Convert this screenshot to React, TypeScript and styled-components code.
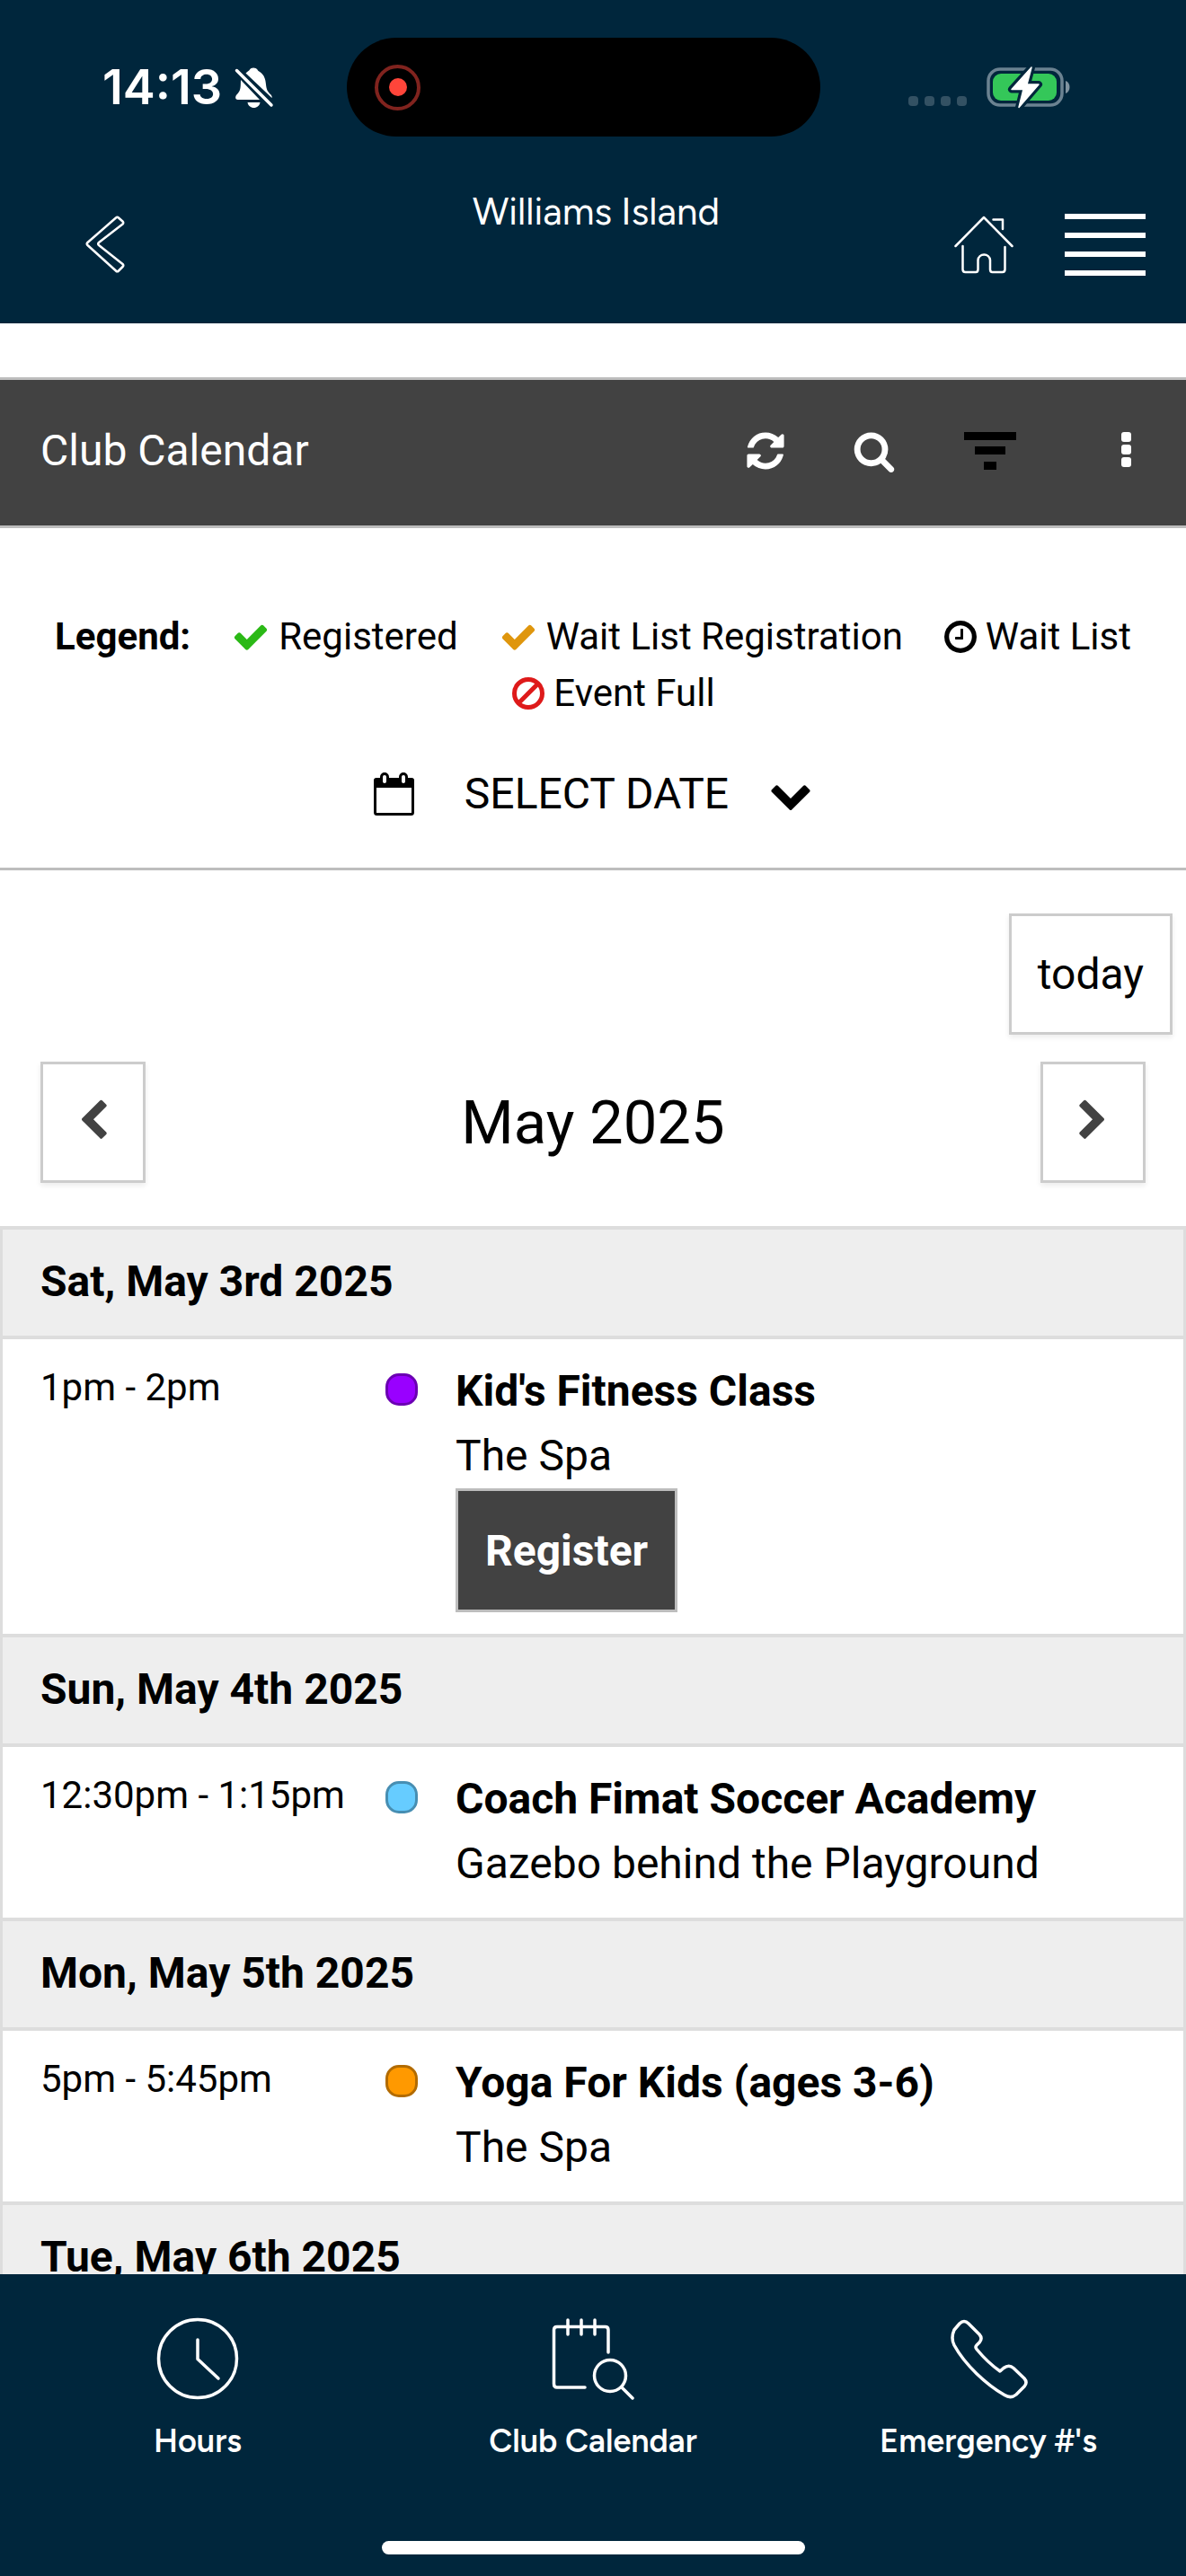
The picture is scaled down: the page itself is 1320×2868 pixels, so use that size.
import React from "react";
import styled, { createGlobalStyle } from "styled-components";

const navy = "#00263c";
const charcoal = "#424242";
const line = "#bdbdbd";
const listLine = "#dddddd";
const brandFont = `Figtree, Lato, "Open Sans", sans-serif`;

const GlobalStyle = createGlobalStyle`
  *, *::before, *::after { box-sizing: border-box; }
  body { margin: 0; background: #fff; }
  body, button { font-family: Roboto, "Noto Sans", sans-serif; color: #000; }
  button { border: 0; padding: 0; background: none; cursor: pointer; }
  h1, h2, h3, p, ul { margin: 0; padding: 0; font-weight: inherit; }
  ul { list-style: none; }
  svg { display: block; flex: none; }
`;

const Screen = styled.div`
  display: flex;
  flex-direction: column;
  height: 100vh;
`;

const AppHeader = styled.header`
  background: ${navy};
  color: #fff;
`;

const StatusBar = styled.div`
  display: grid;
  grid-template-columns: 1fr auto 1fr;
  align-items: center;
  height: 194px;
  padding-right: 21px;
`;

const StatusLeft = styled.div`
  display: flex;
  align-items: center;
  gap: 14px;
  padding-left: 114px;
`;

const Time = styled.time`
  font: 600 54px/60px Inter, sans-serif;
`;

const Island = styled.div`
  display: flex;
  align-items: center;
  width: 527px;
  height: 110px;
  padding-left: 31px;
  border-radius: 55px;
  background: #000;
`;

const Recording = styled.span`
  display: grid;
  place-items: center;
  width: 51px;
  height: 51px;
  border: 4px solid #80231e;
  border-radius: 50%;

  &::after {
    content: "";
    width: 20px;
    height: 20px;
    border-radius: 50%;
    background: #ff453a;
  }
`;

const StatusRight = styled.div`
  display: flex;
  align-items: center;
  justify-content: flex-end;
  gap: 22px;
  padding-right: 107px;
`;

const Signal = styled.span`
  display: flex;
  gap: 7px;
  padding-top: 30px;
`;

const SignalDot = styled.span`
  width: 11px;
  height: 11px;
  border-radius: 4px;
  background: #335163;
`;

const NavBar = styled.div`
  display: grid;
  grid-template-columns: 1fr auto 1fr;
  align-items: center;
  height: 166px;
  padding: 0 45px 10px 52px;
`;

const BackButton = styled.button`
  justify-self: start;
  padding-left: 43px;
`;

const ClubName = styled.h1`
  align-self: start;
  padding-top: 12px;
  font: 400 42px/60px ${brandFont};
`;

const NavActions = styled.div`
  display: flex;
  align-items: center;
  justify-content: flex-end;
  gap: 57px;
`;

const MenuButton = styled.button`
  display: grid;
  gap: 15px;
  width: 90px;
`;

const MenuBar = styled.span`
  height: 6px;
  background: #fff;
`;

const Content = styled.main`
  flex: 1;
  min-height: 0;
  overflow-y: auto;
  scrollbar-width: none;
  padding-top: 60px;
`;

const Toolbar = styled.div`
  display: flex;
  align-items: center;
  justify-content: space-between;
  height: 168px;
  padding: 0 60px 4px 45px;
  border: solid ${line};
  border-width: 3px 0;
  background: ${charcoal};
  color: #fff;
`;

const ToolbarTitle = styled.h2`
  font-size: 48px;
  line-height: 72px;
`;

const ToolbarActions = styled.div`
  display: flex;
  align-items: center;
`;

const ToolButton = styled.button<{ $gap?: number; $color?: string }>`
  margin-left: ${(p) => p.$gap ?? 0}px;
  color: ${(p) => p.$color ?? "#fff"};
`;

const Filters = styled.section`
  padding: 89px 0 46px;
  border-bottom: 3px solid ${line};
`;

const Legend = styled.ul`
  display: flex;
  flex-wrap: wrap;
  justify-content: center;
  font-size: 42px;
  line-height: 63px;
`;

const LegendTitle = styled.li`
  font-weight: 700;
`;

const LegendItem = styled.li`
  display: flex;
  align-items: center;
  gap: 10px;
  margin-left: 46px;
`;

const DateButton = styled.button`
  display: flex;
  align-items: center;
  gap: 45px;
  margin: 45px auto 0;
  font-size: 48px;
  line-height: 72px;
`;

const TodayRow = styled.div`
  display: flex;
  justify-content: flex-end;
  padding: 48px 15px 30px;
`;

const MonthRow = styled.div`
  display: flex;
  align-items: center;
  justify-content: space-between;
  padding: 0 45px 48px;
`;

const OutlineButton = styled.button<{ $square?: boolean }>`
  display: grid;
  place-items: center;
  height: 135px;
  ${(p) => (p.$square ? "width: 117px; padding-bottom: 3px;" : "padding: 0 29px;")}
  border: 3px solid #cccccc;
  background: #fff;
  box-shadow: 0 3px 6px rgba(0, 0, 0, 0.08);
  font-size: 48px;
`;

const Month = styled.h2`
  font-size: 67px;
  line-height: 80px;
`;

const Agenda = styled.div`
  border: solid ${listLine};
  border-width: 0 3px;
`;

const DayHeader = styled.h3`
  padding: 22px 42px 24px;
  border-top: 4px solid ${listLine};
  background: #eeeeee;
  font-size: 48px;
  font-weight: 700;
  line-height: 72px;
`;

const EventRow = styled.article`
  display: grid;
  grid-template-columns: 384px 78px 1fr;
  padding: 22px 42px 24px;
  border-top: 4px solid ${listLine};
`;

const EventTime = styled.time`
  font-size: 42px;
  line-height: 63px;
`;

const EventDot = styled.span<{ $fill: string; $edge: string }>`
  width: 36px;
  height: 36px;
  margin-top: 16px;
  border: 3px solid ${(p) => p.$edge};
  border-radius: 15px;
  background: ${(p) => p.$fill};
`;

const EventBody = styled.div`
  font-size: 48px;
  line-height: 72px;
`;

const EventTitle = styled.h4`
  margin: 0;
  font-weight: 700;
`;

const RegisterButton = styled.button`
  display: block;
  height: 138px;
  padding: 0 30px;
  border: 3px solid ${line};
  background: ${charcoal};
  color: #fff;
  font-size: 48px;
  font-weight: 700;
`;

const TabBar = styled.footer`
  display: flex;
  flex-direction: column;
  justify-content: space-between;
  align-items: center;
  height: 336px;
  padding: 48px 0 24px;
  background: ${navy};
`;

const Tabs = styled.nav`
  display: grid;
  grid-template-columns: repeat(3, 1fr);
  width: 100%;
`;

const Tab = styled.a`
  display: flex;
  flex-direction: column;
  align-items: center;
  gap: 22px;
  color: #fff;
  font: 600 36px/48px ${brandFont};
  text-decoration: none;
`;

const HomeIndicator = styled.div`
  width: 471px;
  height: 15px;
  border-radius: 8px;
  background: #fff;
`;

type GlyphProps = { d: string; size?: number; crop?: number; color?: string; flip?: boolean };

/* Solid glyph on a 1792 unit grid; crop trims the same margin off both sides. */
const Glyph = ({ d, size = 48, crop = 0, color = "currentColor", flip }: GlyphProps) => (
  <svg
    width={Math.round((size * (1792 - 2 * crop)) / 1792)}
    height={size}
    viewBox={`${crop} 0 ${1792 - 2 * crop} 1792`}
    aria-hidden="true"
  >
    <path d={d} fill={color} transform={flip ? "matrix(-1 0 0 1 1792 0)" : undefined} />
  </svg>
);

const glyphs = {
  refresh:
    "M1639 1056q0 5-1 7-64 268-268 434.5T892 1664q-146 0-282.500-55T366 1452l-129 129q-19 19-45 19t-45-19-19-45v-448q0-26 19-45t45-19h448q26 0 45 19t19 45-19 45l-137 137q71 66 161 102t187 36q134 0 250-65t186-179q11-17 53-117 8-23 30-23h192q13 0 22.500 9.500t9.500 22.500zm25-800v448q0 26-19 45t-45 19h-448q-26 0-45-19t-19-45 19-45l138-138q-148-137-349-137-134 0-250 65T460 628q-11 17-53 117-8 23-30 23H178q-13 0-22.500-9.500T146 736v-7q65-268 270-434.500T896 128q146 0 284 55.500T1425 340l130-129q19-19 45-19t45 19 19 45z",
  search:
    "M1216 832q0-185-131.500-316.500T768 384 451.500 515.500 320 832t131.500 316.500T768 1280t316.500-131.500T1216 832zm512 832q0 52-38 90t-90 38q-54 0-90-38l-343-342q-179 124-399 124-143 0-273.500-55.500t-225-150-150-225T64 832t55.500-273.500 150-225 225-150T768 128t273.500 55.500 225 150 150 225T1472 832q0 220-124 399l343 343q37 37 37 90z",
  check:
    "M1671 566q0 40-28 68l-724 724-136 136q-28 28-68 28t-68-28l-136-136-362-362q-28-28-28-68t28-68l136-136q28-28 68-28t68 28l294 295 656-657q28-28 68-28t68 28l136 136q28 28 28 68z",
  clock:
    "M1024 544v448q0 14-9 23t-23 9H672q-14 0-23-9t-9-23v-64q0-14 9-23t23-9h224V544q0-14 9-23t23-9h64q14 0 23 9t9 23zm416 352q0-148-73-273t-198-198-273-73-273 73-198 198-73 273 73 273 198 198 273 73 273-73 198-198 73-273zm224 0q0 209-103 385.500T1281.500 1561 896 1664t-385.500-103T231 1281.500 128 896t103-385.500T510.500 231 896 128t385.500 103T1561 510.500 1664 896z",
  chevronDown:
    "M1683 808l-742 741q-19 19-45 19t-45-19L109 808q-19-19-19-45.500t19-45.500l166-165q19-19 45-19t45 19l531 531 531-531q19-19 45-19t45 19l166 165q19 19 19 45.500t-19 45.500z",
  chevronLeft:
    "M1427 301l-531 531 531 531q19 19 19 45t-19 45l-166 166q-19 19-45 19t-45-19l-742-742q-19-19-19-45t19-45l742-742q19-19 45-19t45 19l166 166q19 19 19 45t-19 45z",
};

const BellOffIcon = () => (
  <svg width="44" height="46" viewBox="0 0 44 46" fill="#fff" aria-hidden="true">
    <path d="M12.500 7.500C15 5 16.500 4.500 17 3.500C18 .8 24 .8 25.500 3.500C26 5 27.500 5.300 29.500 7C33 10 34.500 14 35 20C35.500 26 37 28 40 31C41.500 32.500 42 34 41.500 35Z" />
    <path d="M7 15L28 37H3.500C1 37 .5 34 2 32C5 28.500 6.500 27 6.800 21Z" />
    <path d="M14.500 40H28.500C28 43.500 25 46 21.500 46S15 43.500 14.500 40Z" />
    <path d="M2.500 4.500L41 43" stroke="#fff" strokeWidth="3.500" strokeLinecap="round" />
  </svg>
);

const BatteryIcon = () => (
  <svg width="94" height="48" viewBox="0 0 94 48" aria-hidden="true">
    <rect x="2" y="4" width="82" height="40" rx="13" fill="none" stroke="#6b8291" strokeWidth="3.500" />
    <rect x="7" y="9" width="71" height="30" rx="9" fill="#34c759" />
    <path d="M88 17C94 19 94 29 88 31Z" fill="#8093a0" />
    <path
      d="M50 2L28 26.500H41L36 46.500L58 21H45Z"
      fill="#fff"
      stroke={navy}
      strokeWidth="8"
      strokeLinejoin="round"
      paintOrder="stroke"
    />
    <path d="M50 2L28 26.500H41L36 46.500L58 21H45Z" fill="#fff" stroke="#fff" strokeWidth="1.500" strokeLinejoin="round" />
  </svg>
);

const BackIcon = () => (
  <svg width="44" height="64" viewBox="0 0 44 64" fill="none" stroke="#fff" strokeWidth="2.500" strokeLinejoin="round" aria-hidden="true">
    <path d="M34 2.500Q35.500 1 37 2.500L41.500 6.500Q43 8 41.500 9.500L15 30Q13.500 31.500 15 33L41.500 54Q43 55.500 41.500 57L37 61.500Q35.500 63 34 61.500L2.500 33Q1 31.500 2.500 30Z" />
  </svg>
);

const HomeIcon = () => (
  <svg width="66" height="65" viewBox="0 0 66 65" fill="none" stroke="#fff" strokeWidth="2.500" strokeLinecap="round" strokeLinejoin="round" aria-hidden="true">
    <path d="M1.500 34L33 2L64.500 34M43.500 4.500H54V15" />
    <path d="M9.500 34V60Q9.500 63 12.500 63H24Q26.500 63 26.500 60V49.500A6.800 6.800 0 0 1 40 49.500V60Q40 63 42.500 63H53.500Q56.500 63 56.500 60V35" />
  </svg>
);

const FilterIcon = () => (
  <svg width="58" height="42" viewBox="0 0 58 42" fill="currentColor" aria-hidden="true">
    <path d="M0 0H58V9H0ZM12 16H46V25H12ZM22 33H36V42H22Z" />
  </svg>
);

const MoreIcon = () => (
  <svg width="12" height="42" viewBox="0 0 12 42" fill="currentColor" aria-hidden="true">
    <rect width="11" height="11" rx="3" />
    <rect y="14" width="11" height="11" rx="3" />
    <rect y="28" width="11" height="11" rx="3" />
  </svg>
);

const BanIcon = () => (
  <svg width="36" height="36" viewBox="0 0 36 36" fill="none" stroke="#de1a1a" strokeWidth="5" aria-hidden="true">
    <circle cx="18" cy="18" r="15.500" />
    <path d="M29 7L7 29" />
  </svg>
);

const CalendarIcon = () => (
  <svg width="56" height="50" viewBox="0 0 56 50" aria-hidden="true">
    <rect x="1.500" y="9" width="42" height="38.500" rx="2" fill="none" stroke="#000" strokeWidth="3" />
    <path d="M0 10Q0 7 3 7H42Q45 7 45 10V18H0Z" />
    <rect x="8.500" y="2.500" width="7" height="12" rx="3.500" fill="#fff" stroke="#000" strokeWidth="3" />
    <rect x="29.500" y="2.500" width="7" height="12" rx="3.500" fill="#fff" stroke="#000" strokeWidth="3" />
  </svg>
);

const TabIcon = ({ children }: { children: React.ReactNode }) => (
  <svg width="92" height="92" viewBox="0 0 92 92" fill="none" stroke="#fff" strokeWidth="3.500" strokeLinecap="round" strokeLinejoin="round" aria-hidden="true">
    {children}
  </svg>
);

const tabs = [
  {
    label: "Hours",
    icon: (
      <>
        <circle cx="46" cy="46" r="43.500" />
        <path d="M46 25V46.500L69 68" />
      </>
    ),
  },
  {
    label: "Club Calendar",
    icon: (
      <>
        <path d="M63 39V14Q63 10.500 59.500 10.500H6Q2.500 10.500 2.500 14V74Q2.500 78 6 78H37" />
        <path d="M18 3V19M33 3V19M48 3V19" />
        <circle cx="65" cy="65" r="17.500" />
        <path d="M78 78L90 90" />
      </>
    ),
  },
  {
    label: "Emergency #'s",
    icon: (
      <path d="M14 7Q19 2 24 7L36 19Q40 23.500 36 28L33 31Q31 33 33 35.500C40 44 49 53 59 60L63 56.500Q69 52 74 56.500L86 68Q90 72.500 86 77L77 86Q71 91 64 86.500C44 75 20 53 8 31Q4 23 8 14Z" />
    ),
  },
];

const agenda = [
  {
    day: "Sat, May 3rd 2025",
    time: "1pm - 2pm",
    title: "Kid's Fitness Class",
    place: "The Spa",
    fill: "#9900ff",
    edge: "#6b00b2",
    open: true,
  },
  {
    day: "Sun, May 4th 2025",
    time: "12:30pm - 1:15pm",
    title: "Coach Fimat Soccer Academy",
    place: "Gazebo behind the Playground",
    fill: "#66ccff",
    edge: "#478eb2",
  },
  {
    day: "Mon, May 5th 2025",
    time: "5pm - 5:45pm",
    title: "Yoga For Kids (ages 3-6)",
    place: "The Spa",
    fill: "#ff9900",
    edge: "#b26b00",
  },
  { day: "Tue, May 6th 2025" },
];

export default function App() {
  return (
    <Screen>
      <GlobalStyle />
      <AppHeader>
        <StatusBar>
          <StatusLeft>
            <Time>14:13</Time>
            <BellOffIcon />
          </StatusLeft>
          <Island>
            <Recording />
          </Island>
          <StatusRight>
            <Signal>
              <SignalDot />
              <SignalDot />
              <SignalDot />
              <SignalDot />
            </Signal>
            <BatteryIcon />
          </StatusRight>
        </StatusBar>
        <NavBar>
          <BackButton aria-label="Back">
            <BackIcon />
          </BackButton>
          <ClubName>Williams Island</ClubName>
          <NavActions>
            <button aria-label="Home">
              <HomeIcon />
            </button>
            <MenuButton aria-label="Menu">
              <MenuBar />
              <MenuBar />
              <MenuBar />
              <MenuBar />
            </MenuButton>
          </NavActions>
        </NavBar>
      </AppHeader>

      <Content>
        <Toolbar>
          <ToolbarTitle>Club Calendar</ToolbarTitle>
          <ToolbarActions>
            <ToolButton aria-label="Refresh">
              <Glyph d={glyphs.refresh} />
            </ToolButton>
            <ToolButton aria-label="Search" $gap={73}>
              <Glyph d={glyphs.search} />
            </ToolButton>
            <ToolButton aria-label="Filter" $gap={76} $color="#000">
              <FilterIcon />
            </ToolButton>
            <ToolButton aria-label="More options" $gap={117}>
              <MoreIcon />
            </ToolButton>
          </ToolbarActions>
        </Toolbar>

        <Filters>
          <Legend>
            <LegendTitle>Legend:</LegendTitle>
            <LegendItem>
              <Glyph d={glyphs.check} size={42} color="#2bb916" />
              Registered
            </LegendItem>
            <LegendItem>
              <Glyph d={glyphs.check} size={42} color="#df960d" />
              Wait List Registration
            </LegendItem>
            <LegendItem>
              <Glyph d={glyphs.clock} size={42} crop={128} />
              Wait List
            </LegendItem>
            <LegendItem>
              <BanIcon />
              Event Full
            </LegendItem>
          </Legend>
          <DateButton>
            <CalendarIcon />
            SELECT DATE
            <Glyph d={glyphs.chevronDown} />
          </DateButton>
        </Filters>

        <TodayRow>
          <OutlineButton>today</OutlineButton>
        </TodayRow>
        <MonthRow>
          <OutlineButton $square aria-label="Previous month">
            <Glyph d={glyphs.chevronLeft} color={charcoal} />
          </OutlineButton>
          <Month>May 2025</Month>
          <OutlineButton $square aria-label="Next month">
            <Glyph d={glyphs.chevronLeft} color={charcoal} flip />
          </OutlineButton>
        </MonthRow>

        <Agenda>
          {agenda.map((item) => (
            <section key={item.day}>
              <DayHeader>{item.day}</DayHeader>
              {item.title && (
                <EventRow>
                  <EventTime>{item.time}</EventTime>
                  <EventDot $fill={item.fill!} $edge={item.edge!} />
                  <EventBody>
                    <EventTitle>{item.title}</EventTitle>
                    <p>{item.place}</p>
                    {item.open && <RegisterButton>Register</RegisterButton>}
                  </EventBody>
                </EventRow>
              )}
            </section>
          ))}
        </Agenda>
      </Content>

      <TabBar>
        <Tabs>
          {tabs.map((tab) => (
            <Tab key={tab.label} href="#">
              <TabIcon>{tab.icon}</TabIcon>
              {tab.label}
            </Tab>
          ))}
        </Tabs>
        <HomeIndicator />
      </TabBar>
    </Screen>
  );
}
